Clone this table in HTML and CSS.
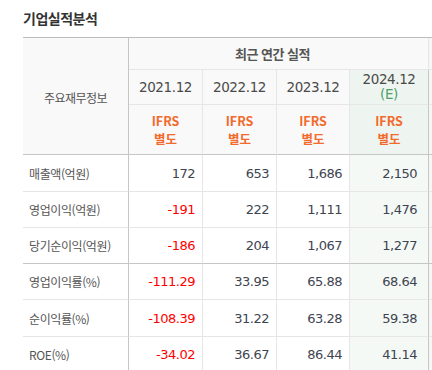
FILE: index.html
```html
<!DOCTYPE html>
<html lang="ko">
<head>
    <meta charset="UTF-8">
    <meta name="viewport" content="width=device-width, initial-scale=1.0">
    <title>기업실적분석</title>
    <link rel="stylesheet" href="styles.css">
</head>
<body>
    <div class="wrap">
        <h2 class="title">기업실적분석</h2>

        <table class="perf">
            <colgroup>
                <col class="c-label">
                <col class="c-year">
                <col class="c-year">
                <col class="c-year">
                <col class="c-est">
                <col class="c-more">
            </colgroup>
            <thead>
                <tr class="h1">
                    <th rowspan="3" class="label-head">주요재무정보</th>
                    <th colspan="4" class="group-head">최근 연간 실적</th>
                    <th class="more"></th>
                </tr>
                <tr class="h2">
                    <th class="year">2021.12</th>
                    <th class="year">2022.12</th>
                    <th class="year">2023.12</th>
                    <th class="year est">2024.12<br><span class="e">(E)</span></th>
                    <th class="more"></th>
                </tr>
                <tr class="h3">
                    <th class="ifrs">IFRS<br>별도</th>
                    <th class="ifrs">IFRS<br>별도</th>
                    <th class="ifrs">IFRS<br>별도</th>
                    <th class="ifrs est">IFRS<br>별도</th>
                    <th class="more"></th>
                </tr>
            </thead>
            <tbody>
                <tr class="r-a">
                    <th>매출액(억원)</th>
                    <td>172</td><td>653</td><td>1,686</td><td class="est">2,150</td><td class="more"></td>
                </tr>
                <tr>
                    <th>영업이익(억원)</th>
                    <td class="neg">-191</td><td>222</td><td>1,111</td><td class="est">1,476</td><td class="more"></td>
                </tr>
                <tr class="grp-end">
                    <th>당기순이익(억원)</th>
                    <td class="neg">-186</td><td>204</td><td>1,067</td><td class="est">1,277</td><td class="more"></td>
                </tr>
                <tr>
                    <th>영업이익률(%)</th>
                    <td class="neg">-111.29</td><td>33.95</td><td>65.88</td><td class="est">68.64</td><td class="more"></td>
                </tr>
                <tr class="r-a">
                    <th>순이익률(%)</th>
                    <td class="neg">-108.39</td><td>31.22</td><td>63.28</td><td class="est">59.38</td><td class="more"></td>
                </tr>
                <tr>
                    <th>ROE(%)</th>
                    <td class="neg">-34.02</td><td>36.67</td><td>86.44</td><td class="est">41.14</td><td class="more"></td>
                </tr>
            </tbody>
        </table>
    </div>
</body>
</html>
```

FILE: styles.css
```css
html, body {
    margin: 0;
    padding: 0;
    background: #fff;
    overflow: hidden;
}
.wrap {
    padding: 8px 0 0 23px;
    width: 420px;
    font-family: "Noto Sans CJK KR", "Noto Sans", sans-serif;
}
.title {
    margin: 0 0 9px;
    font-size: 14px;
    line-height: 20px;
    font-weight: bold;
    color: #333;
    letter-spacing: -0.5px;
}
.perf {
    border-collapse: separate;
    border-spacing: 0;
    table-layout: fixed;
    width: 420px;
    border-top: 1px solid #bcbcbc;
}
.c-label { width: 106px; }
.c-year { width: 74px; }
.c-year:nth-child(4) { width: 73px; }
.c-est { width: 79px; }
.c-more { width: 14px; }

.perf th, .perf td {
    box-sizing: border-box;
    padding: 0;
    border-bottom: 1px solid #e6e6e6;
    border-right: 1px solid #e6e6e6;
    font-weight: normal;
}
.perf thead th {
    background: #f9f9f9;
    text-align: center;
}
.perf .label-head {
    border-right-color: #c6c6c6;
    border-bottom-color: #c6c6c6;
    font-size: 12px;
    color: #555;
    letter-spacing: -0.5px;
    padding-top: 2px;
}
.h1 th { height: 32px; }
.h2 th { height: 35px; }
.h3 th { height: 50px; border-bottom-color: #c6c6c6; }

.group-head {
    font-size: 13px;
    font-weight: bold !important;
    color: #555;
    letter-spacing: -0.5px;
    padding-right: 12px !important;
}
.year {
    font-family: "DejaVu Sans", sans-serif;
    font-size: 13.5px;
    line-height: 15px;
    color: #4a4a4a;
    letter-spacing: -0.4px;
}
.year .e {
    color: #4f9f6a;
}
.ifrs {
    font-size: 12.5px;
    font-weight: bold !important;
    line-height: 18px;
    color: #f26a2c;
}
.perf .est {
    background: #eef5f0;
    border-right-color: #c6c6c6;
}
.perf .more {
    background: #f6f6f6;
    border-right: none;
}

.perf tbody tr th {
    text-align: left;
    padding-left: 6px;
    font-size: 12px;
    color: #555;
    letter-spacing: -0.4px;
    border-right-color: #c6c6c6;
    height: 36px;
    background: #fff;
}
.perf tbody tr.r-a th { height: 37px; }
.perf tbody td {
    text-align: right;
    padding-right: 7px;
    font-family: "DejaVu Sans", sans-serif;
    font-size: 13px;
    letter-spacing: -0.5px;
    color: #3e4450;
}
.perf tbody td.est {
    background: #f4f9f6;
    padding-right: 11px;
}
.perf tbody td.neg {
    color: #f00;
}
.perf tbody tr.grp-end th,
.perf tbody tr.grp-end td {
    border-bottom-color: #c6c6c6;
}
```
